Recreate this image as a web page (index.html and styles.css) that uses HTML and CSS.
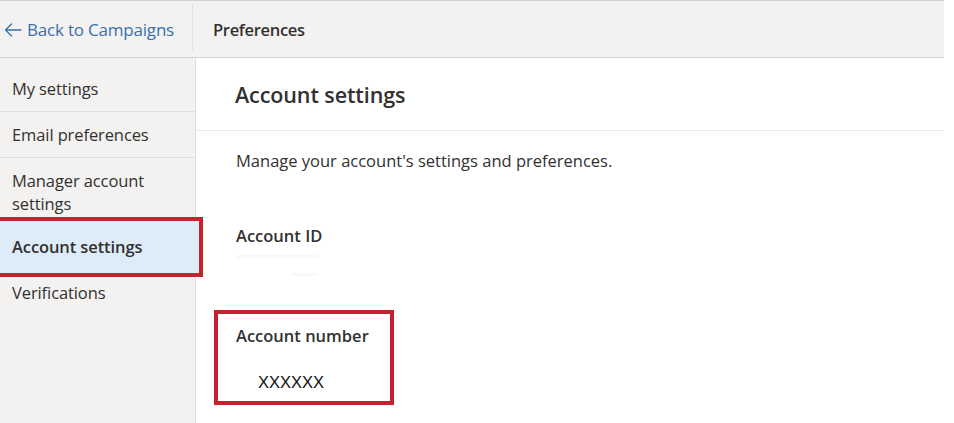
FILE: index.html
```html
<!DOCTYPE html>
<html lang="en">
<head>
<meta charset="utf-8">
<title>Preferences - Account settings</title>
<link rel="stylesheet" href="styles.css">
</head>
<body>
<div class="app">
  <header class="topbar">
    <a class="back" href="#">
      <svg class="back-icon" width="18" height="14" viewBox="0 0 18 14" aria-hidden="true">
        <path d="M17 7H1.5M7.5 1L1.5 7l6 6" fill="none" stroke="currentColor" stroke-width="1.3" stroke-linecap="round" stroke-linejoin="round"/>
      </svg>
      <span>Back to Campaigns</span>
    </a>
    <div class="divider"></div>
    <div class="title">Preferences</div>
  </header>
  <div class="body">
    <nav class="sidebar">
      <div class="nav-item sep">My settings</div>
      <div class="nav-item sep">Email preferences</div>
      <div class="nav-item manager">Manager account<br>settings</div>
      <div class="nav-item selected">Account settings</div>
      <div class="nav-item last">Verifications</div>
    </nav>
    <main class="content">
      <div class="page-head">
        <h1 class="page-title">Account settings</h1>
      </div>
      <div class="page-body">
        <p class="intro">Manage your account's settings and preferences.</p>
        <div class="field field-id">
          <div class="label">Account ID</div>
          <div class="blurred">
            <span class="blur-a"></span>
            <span class="blur-b"></span>
          </div>
        </div>
        <div class="field field-number">
          <div class="label">Account number</div>
          <div class="value">XXXXXX</div>
        </div>
      </div>
    </main>
  </div>
</div>
</body>
</html>
```
FILE: styles.css
```css
* { box-sizing: border-box; }
html, body { margin: 0; padding: 0; background: #ffffff; }
body {
  font-family: "Open Sans", "Noto Sans", "Liberation Sans", sans-serif;
  color: #323130;
  width: 954px;
  height: 423px;
  overflow: hidden;
}
.app {
  width: 944px;
  height: 423px;
  display: flex;
  flex-direction: column;
}
.topbar {
  height: 58px;
  background: #f3f2f1;
  border-top: 1px solid #d4d2d0;
  border-bottom: 1px solid #d4d2d0;
  display: flex;
  align-items: center;
  flex: none;
}
.back {
  display: flex;
  align-items: center;
  gap: 5px;
  padding-left: 4px;
  width: 192px;
  color: #3a6fac;
  text-decoration: none;
  font-size: 17px;
  letter-spacing: -0.2px;
}
.back-icon { flex: none; margin-top: 1px; }
.divider {
  width: 1px;
  height: 46px;
  background: #e1dfdd;
  align-self: flex-start;
  margin-top: 3px;
}
.title {
  padding-left: 20px;
  font-size: 16.5px;
  font-weight: 600;
  letter-spacing: -0.3px;
}
.body {
  flex: 1;
  display: flex;
  min-height: 0;
}
.sidebar {
  width: 196px;
  flex: none;
  background: #f3f2f1;
  border-right: 1px solid #e1dfdd;
  padding-top: 8px;
  display: flex;
  flex-direction: column;
}
.nav-item {
  font-size: 16.5px;
  line-height: 23px;
  padding: 11px 12px;
  letter-spacing: -0.1px;
  color: #323130;
}
.nav-item.sep { border-bottom: 1px solid #e1dfdd; }
.nav-item.manager { padding-bottom: 6px; }
.nav-item.selected {
  background: #deecf9;
  font-weight: 600;
  padding: 14px 12px 15px;
  outline: 4px solid #c8202e;
  margin-right: -4px;
  position: relative;
}
.nav-item.last { padding-top: 8px; }
.content {
  flex: 1;
  background: #ffffff;
  display: flex;
  flex-direction: column;
}
.page-head {
  height: 73px;
  border-bottom: 1px solid #edebe9;
  display: flex;
  align-items: center;
  padding-left: 39px;
  flex: none;
}
.page-title {
  margin: 0;
  font-size: 21.5px;
  font-weight: 600;
  letter-spacing: -0.1px;
  color: #323130;
}
.page-body { padding-left: 40px; padding-top: 18px; }
.intro {
  margin: 0;
  font-size: 16.5px;
  line-height: 24px;
  letter-spacing: 0;
  color: #323130;
}
.label {
  font-size: 16.5px;
  font-weight: 600;
  line-height: 24px;
  letter-spacing: 0;
}
.field-id { margin-top: 51px; }
.blurred {
  position: relative;
  height: 55px;
}
.blur-a {
  display: block;
  width: 82px;
  height: 3px;
  margin-top: 7px;
  background: #f9f9f9;
}
.blur-b {
  display: block;
  width: 26px;
  height: 3px;
  margin: 15px 0 0 56px;
  background: #f9f9f9;
}
.field-number {
  margin-left: -22px;
  width: 180px;
  border: 4px solid #c8202e;
  padding: 10px 0 7px 18px;
}
.value {
  margin-top: 22px;
  padding-left: 22px;
  font-family: "Liberation Sans", Arial, sans-serif;
  font-size: 16.5px;
  line-height: 24px;
  color: #111111;
}
```
